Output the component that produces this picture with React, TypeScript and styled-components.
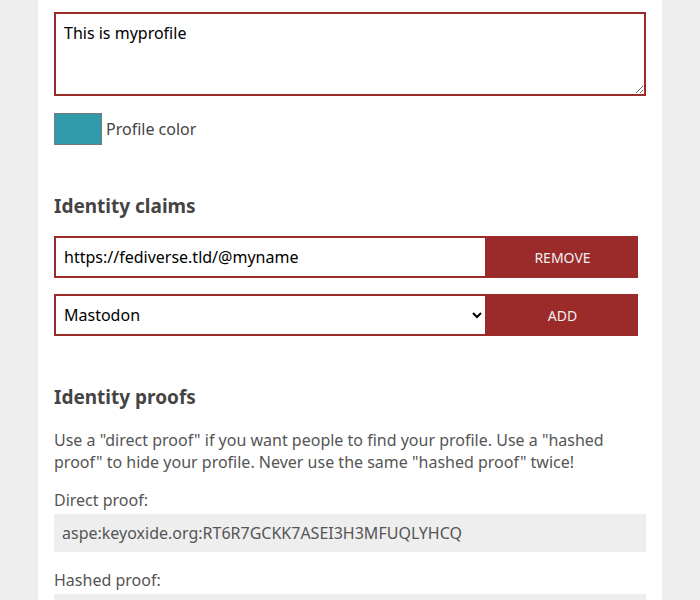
import styled, { createGlobalStyle } from "styled-components";

const GlobalStyle = createGlobalStyle`
    html, body {
        margin: 0;
        background: #eeeeee;
        font-family: "Noto Sans", "Open Sans", sans-serif;
        color: #444;
    }
`;

const Card = styled.main`
    width: 592px;
    margin: 0 38px;
    padding: 12px 16px 40px;
    background: #ffffff;
    min-height: 600px;
    box-sizing: content-box;
`;

const TextArea = styled.textarea`
    display: block;
    width: 100%;
    box-sizing: border-box;
    height: 84px;
    margin: 0;
    padding: 8px 8px;
    border: 2px solid #9b2a2b;
    font-family: inherit;
    font-size: 16px;
    line-height: 22px;
    color: #000;
    resize: vertical;
    outline: none;
`;

const ColorRow = styled.label`
    display: flex;
    align-items: center;
    gap: 4px;
    margin-top: 17px;
    font-size: 16px;
    color: #444;
`;

const Swatch = styled.span<{ $color: string }>`
    display: block;
    width: 48px;
    height: 32px;
    box-sizing: border-box;
    border: 1px solid #777;
    background: ${(p) => p.$color};
`;

const Heading = styled.h2`
    margin: 0;
    font-size: 19px;
    font-weight: 700;
    color: #444;
    line-height: 28px;
`;

const Section = styled.section<{ $top: number }>`
    margin-top: ${(p) => p.$top}px;
`;

const ClaimRow = styled.div`
    display: flex;
    width: 584px;
    height: 42px;
    margin-top: 16px;
    & + & {
        margin-top: 16px;
    }
`;

const ClaimInput = styled.input`
    flex: 0 0 433px;
    box-sizing: border-box;
    height: 100%;
    margin: 0;
    padding: 0 8px;
    border: 2px solid #9b2a2b;
    font-family: inherit;
    font-size: 16px;
    color: #000;
    outline: none;
`;

const ClaimSelect = styled.select`
    flex: 0 0 433px;
    box-sizing: border-box;
    height: 100%;
    margin: 0;
    padding: 0 4px;
    border: 2px solid #9b2a2b;
    border-radius: 0;
    background: #fff;
    font-family: inherit;
    font-size: 16px;
    color: #000;
    outline: none;
`;

const ActionButton = styled.button`
    flex: 1;
    margin: 0;
    border: none;
    background: #9b2a2b;
    color: #f0f0f0;
    font-family: inherit;
    font-size: 14px;
    text-transform: uppercase;
    cursor: pointer;
`;

const Note = styled.p`
    margin: 18px 0 0;
    font-size: 16px;
    line-height: 22px;
    color: #555;
`;

const FieldLabel = styled.div<{ $top: number }>`
    margin-top: ${(p) => p.$top}px;
    font-size: 16px;
    line-height: 22px;
    color: #555;
`;

const ProofBox = styled.div`
    margin-top: 3px;
    height: 38px;
    display: flex;
    align-items: center;
    padding: 0 8px;
    background: #eeeeee;
    font-size: 16px;
    color: #555;
`;

export default function App() {
    return (
        <>
            <GlobalStyle />
            <Card>
                <TextArea defaultValue="This is myprofile" />
                <ColorRow>
                    <Swatch $color="#329bab" />
                    Profile color
                </ColorRow>

                <Section $top={47}>
                    <Heading>Identity claims</Heading>
                    <ClaimRow>
                        <ClaimInput defaultValue="https://fediverse.tld/@myname" />
                        <ActionButton>Remove</ActionButton>
                    </ClaimRow>
                    <ClaimRow>
                        <ClaimSelect defaultValue="mastodon">
                            <option value="mastodon">Mastodon</option>
                        </ClaimSelect>
                        <ActionButton>Add</ActionButton>
                    </ClaimRow>
                </Section>

                <Section $top={47}>
                    <Heading>Identity proofs</Heading>
                    <Note>
                        Use a "direct proof" if you want people to find your profile. Use a "hashed proof" to hide your profile. Never use the same "hashed proof" twice!
                    </Note>
                    <FieldLabel $top={16}>Direct proof:</FieldLabel>
                    <ProofBox>aspe:keyoxide.org:RT6R7GCKK7ASEI3H3MFUQLYHCQ</ProofBox>
                    <FieldLabel $top={17}>Hashed proof:</FieldLabel>
                    <ProofBox />
                </Section>
            </Card>
        </>
    );
}
